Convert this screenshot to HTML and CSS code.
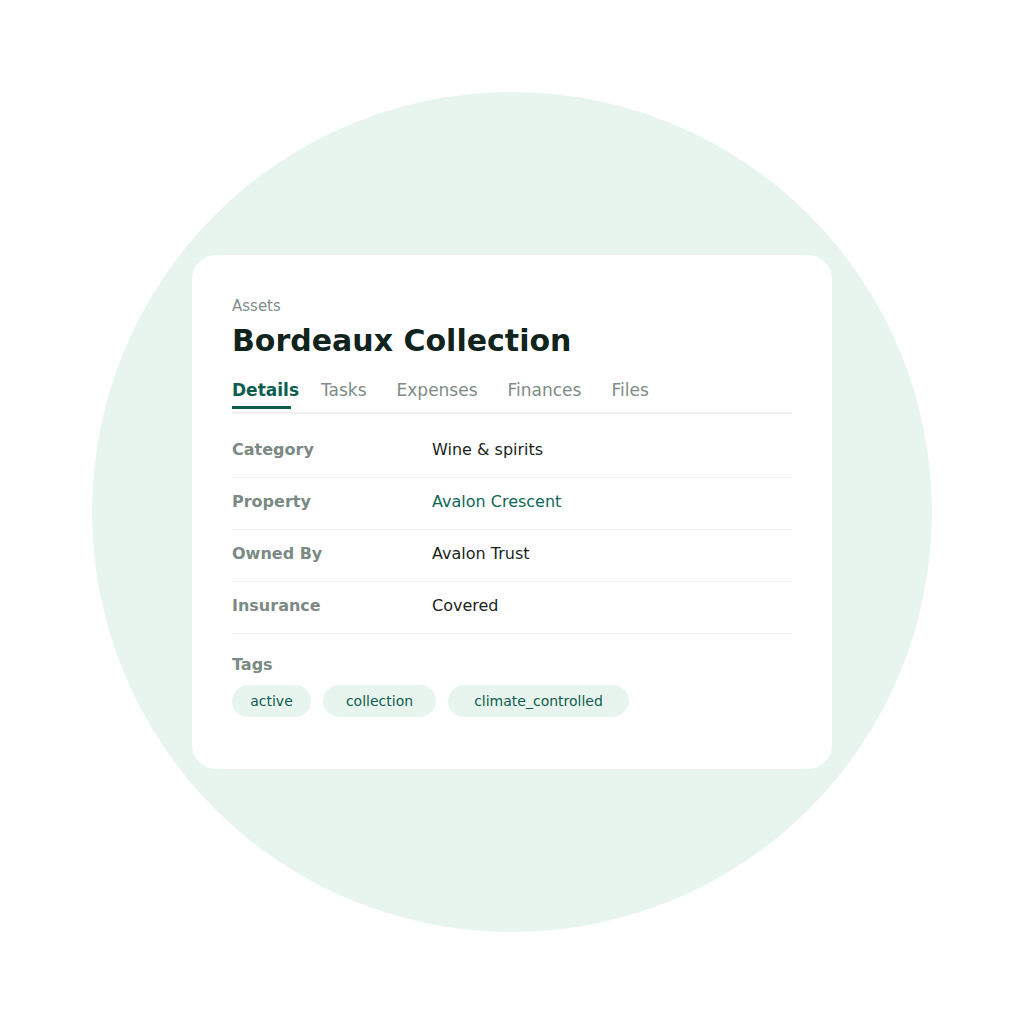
FILE: index.html
```
<!DOCTYPE html>
<html lang="en">
<head>
<meta charset="utf-8">
<title>Bordeaux Collection</title>
<link rel="stylesheet" href="styles.css">
</head>
<body>
<div class="stage">
  <div class="circle">
    <div class="card">
      <div class="crumb">Assets</div>
      <h1 class="title">Bordeaux Collection</h1>
      <nav class="tabs">
        <span class="tab tab-active">Details</span>
        <span class="tab">Tasks</span>
        <span class="tab">Expenses</span>
        <span class="tab">Finances</span>
        <span class="tab">Files</span>
      </nav>
      <dl class="details">
        <div class="row"><dt class="label">Category</dt><dd class="value">Wine &amp; spirits</dd></div>
        <div class="row"><dt class="label">Property</dt><dd class="value value-link">Avalon Crescent</dd></div>
        <div class="row"><dt class="label">Owned By</dt><dd class="value">Avalon Trust</dd></div>
        <div class="row"><dt class="label">Insurance</dt><dd class="value">Covered</dd></div>
      </dl>
      <div class="tags">
        <div class="tags-label">Tags</div>
        <div class="chips">
          <span class="chip chip-active">active</span>
          <span class="chip chip-collection">collection</span>
          <span class="chip chip-climate">climate_controlled</span>
        </div>
      </div>
    </div>
  </div>
</div>
</body>
</html>
```
FILE: styles.css
```
* { box-sizing: border-box; }
html, body {
  margin: 0;
  padding: 0;
  background: #ffffff;
  font-family: "DejaVu Sans", "Liberation Sans", sans-serif;
}
.stage {
  width: 1024px;
  height: 1024px;
  display: flex;
  align-items: center;
  justify-content: center;
}
.circle {
  width: 840px;
  height: 840px;
  border-radius: 50%;
  background: #e8f5ef;
  display: flex;
  align-items: center;
  justify-content: center;
}
.card {
  width: 640px;
  background: #ffffff;
  border-radius: 24px;
  padding: 41px 40px 52px;
}
.crumb {
  font-size: 15px;
  line-height: 21px;
  color: #7f8e88;
}
.title {
  margin: 6px 0 0;
  font-size: 30px;
  line-height: 36px;
  font-weight: bold;
  color: #10241d;
}
.tabs {
  margin-top: 19px;
  display: flex;
  gap: 30px;
  padding-bottom: 3px;
  border-bottom: 2px solid #eff1f0;
}
.tab {
  font-size: 17px;
  line-height: 24px;
  color: #7d8c86;
  padding-bottom: 4px;
  border-bottom: 3px solid transparent;
  white-space: nowrap;
}
.tab-active {
  width: 59px;
  font-weight: bold;
  color: #0b5e4f;
  border-bottom-color: #0b5e4f;
}
.details {
  margin: 12px 0 0;
  padding: 0;
}
.row {
  display: flex;
  padding: 12px 0 15px;
  border-bottom: 1px solid #f1f3f2;
  font-size: 16px;
  line-height: 24px;
}
.label {
  width: 200px;
  font-weight: bold;
  color: #7b8a84;
}
.value {
  margin: 0;
  color: #1a1f1c;
}
.value-link {
  color: #0e6656;
}
.tags {
  margin-top: 19px;
}
.tags-label {
  font-size: 16px;
  line-height: 24px;
  font-weight: bold;
  color: #7b8a84;
}
.chips {
  margin-top: 8px;
  display: flex;
  gap: 12px;
}
.chip {
  height: 32px;
  line-height: 32px;
  border-radius: 16px;
  background: #e8f5ef;
  color: #0f5c4e;
  font-size: 14px;
  text-align: center;
}
.chip-active { width: 79px; }
.chip-collection { width: 113px; }
.chip-climate { width: 181px; }
```
